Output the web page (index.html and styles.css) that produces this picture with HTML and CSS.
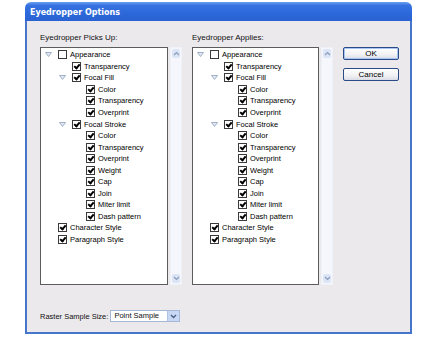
FILE: index.html
```html
<!DOCTYPE html>
<html lang="en">
<head>
    <meta charset="UTF-8">
    <title>Eyedropper Options</title>
    <link rel="stylesheet" href="styles.css">
</head>
<body>
    <div class="window">
        <div class="titlebar">Eyedropper Options</div>
        <div class="body">
            <div class="cols">
                <div class="col col-left">
                    <div class="label">Eyedropper Picks Up:</div>
                    <div class="list">
                        <div class="tree">
                            <div class="row l0"><span class="tw"><svg width="7" height="5" viewBox="0 0 7 5"><polygon points="0.5,0.5 6.5,0.5 3.5,4.5" fill="#e3e9f3" stroke="#9fb0c8"/></svg></span><span class="cb"></span>Appearance</div>
                            <div class="row l1"><span class="tw"></span><span class="cb on"></span>Transparency</div>
                            <div class="row l1"><span class="tw"><svg width="7" height="5" viewBox="0 0 7 5"><polygon points="0.5,0.5 6.5,0.5 3.5,4.5" fill="#e3e9f3" stroke="#9fb0c8"/></svg></span><span class="cb on"></span>Focal Fill</div>
                            <div class="row l2"><span class="tw"></span><span class="cb on"></span>Color</div>
                            <div class="row l2"><span class="tw"></span><span class="cb on"></span>Transparency</div>
                            <div class="row l2"><span class="tw"></span><span class="cb on"></span>Overprint</div>
                            <div class="row l1"><span class="tw"><svg width="7" height="5" viewBox="0 0 7 5"><polygon points="0.5,0.5 6.5,0.5 3.5,4.5" fill="#e3e9f3" stroke="#9fb0c8"/></svg></span><span class="cb on"></span>Focal Stroke</div>
                            <div class="row l2"><span class="tw"></span><span class="cb on"></span>Color</div>
                            <div class="row l2"><span class="tw"></span><span class="cb on"></span>Transparency</div>
                            <div class="row l2"><span class="tw"></span><span class="cb on"></span>Overprint</div>
                            <div class="row l2"><span class="tw"></span><span class="cb on"></span>Weight</div>
                            <div class="row l2"><span class="tw"></span><span class="cb on"></span>Cap</div>
                            <div class="row l2"><span class="tw"></span><span class="cb on"></span>Join</div>
                            <div class="row l2"><span class="tw"></span><span class="cb on"></span>Miter limit</div>
                            <div class="row l2"><span class="tw"></span><span class="cb on"></span>Dash pattern</div>
                            <div class="row l0"><span class="tw"></span><span class="cb on"></span>Character Style</div>
                            <div class="row l0"><span class="tw"></span><span class="cb on"></span>Paragraph Style</div>
                        </div>
                        <div class="sb">
                            <span class="sb-btn"><svg width="7" height="5" viewBox="0 0 7 5"><polyline points="1,4 3.5,1.5 6,4" fill="none" stroke="#8a9cba" stroke-width="1.2"/></svg></span>
                            <span class="sb-btn"><svg width="7" height="5" viewBox="0 0 7 5"><polyline points="1,1 3.5,3.5 6,1" fill="none" stroke="#8a9cba" stroke-width="1.2"/></svg></span>
                        </div>
                    </div>
                </div>
                <div class="col col-right">
                    <div class="label">Eyedropper Applies:</div>
                    <div class="list">
                        <div class="tree">
                            <div class="row l0"><span class="tw"><svg width="7" height="5" viewBox="0 0 7 5"><polygon points="0.5,0.5 6.5,0.5 3.5,4.5" fill="#e3e9f3" stroke="#9fb0c8"/></svg></span><span class="cb"></span>Appearance</div>
                            <div class="row l1"><span class="tw"></span><span class="cb on"></span>Transparency</div>
                            <div class="row l1"><span class="tw"><svg width="7" height="5" viewBox="0 0 7 5"><polygon points="0.5,0.5 6.5,0.5 3.5,4.5" fill="#e3e9f3" stroke="#9fb0c8"/></svg></span><span class="cb on"></span>Focal Fill</div>
                            <div class="row l2"><span class="tw"></span><span class="cb on"></span>Color</div>
                            <div class="row l2"><span class="tw"></span><span class="cb on"></span>Transparency</div>
                            <div class="row l2"><span class="tw"></span><span class="cb on"></span>Overprint</div>
                            <div class="row l1"><span class="tw"><svg width="7" height="5" viewBox="0 0 7 5"><polygon points="0.5,0.5 6.5,0.5 3.5,4.5" fill="#e3e9f3" stroke="#9fb0c8"/></svg></span><span class="cb on"></span>Focal Stroke</div>
                            <div class="row l2"><span class="tw"></span><span class="cb on"></span>Color</div>
                            <div class="row l2"><span class="tw"></span><span class="cb on"></span>Transparency</div>
                            <div class="row l2"><span class="tw"></span><span class="cb on"></span>Overprint</div>
                            <div class="row l2"><span class="tw"></span><span class="cb on"></span>Weight</div>
                            <div class="row l2"><span class="tw"></span><span class="cb on"></span>Cap</div>
                            <div class="row l2"><span class="tw"></span><span class="cb on"></span>Join</div>
                            <div class="row l2"><span class="tw"></span><span class="cb on"></span>Miter limit</div>
                            <div class="row l2"><span class="tw"></span><span class="cb on"></span>Dash pattern</div>
                            <div class="row l0"><span class="tw"></span><span class="cb on"></span>Character Style</div>
                            <div class="row l0"><span class="tw"></span><span class="cb on"></span>Paragraph Style</div>
                        </div>
                        <div class="sb">
                            <span class="sb-btn"><svg width="7" height="5" viewBox="0 0 7 5"><polyline points="1,4 3.5,1.5 6,4" fill="none" stroke="#8a9cba" stroke-width="1.2"/></svg></span>
                            <span class="sb-btn"><svg width="7" height="5" viewBox="0 0 7 5"><polyline points="1,1 3.5,3.5 6,1" fill="none" stroke="#8a9cba" stroke-width="1.2"/></svg></span>
                        </div>
                    </div>
                </div>
                <div class="col col-buttons">
                    <button class="btn btn-default">OK</button>
                    <button class="btn">Cancel</button>
                </div>
            </div>
            <div class="raster">
                <span>Raster Sample Size:</span>
                <div class="select">
                    <span class="select-value">Point Sample</span>
                    <span class="select-arrow"><svg width="7" height="5" viewBox="0 0 7 5"><polyline points="1,1 3.5,3.5 6,1" fill="none" stroke="#4d6185" stroke-width="1.4"/></svg></span>
                </div>
            </div>
        </div>
    </div>
</body>
</html>
```

FILE: styles.css
```css
body {
    margin: 0;
    background: #fff;
    font-family: 'Liberation Sans', Arial, sans-serif;
    color: #000;
}
.window {
    margin: 2px 0 0 25px;
    width: 387px;
}
.titlebar {
    height: 19px;
    box-sizing: border-box;
    padding: 1px 0 0 5px;
    display: flex;
    align-items: center;
    border-radius: 6px 6px 0 0;
    background: linear-gradient(#6a9ff0 0%, #3673e0 18%, #2c68da 60%, #2a62d2 100%);
    color: #fff;
    font-family: 'DejaVu Sans', sans-serif;
    font-weight: bold;
    font-size: 8px;
}
.body {
    border: 2px solid #4676cc;
    border-top: none;
    background: #ece9ed;
    padding: 12px 11px 10px 13px;
}
.cols {
    display: flex;
    gap: 10px;
}
.col-left {
    width: 142px;
}
.col-right {
    width: 141px;
}
.col-buttons {
    width: 56px;
    padding-top: 14px;
    display: flex;
    flex-direction: column;
    gap: 8px;
}
.label {
    height: 10px;
    line-height: 10px;
    font-size: 8px;
    margin-bottom: 4px;
    color: #111;
}
.list {
    display: flex;
    height: 238px;
}
.tree {
    flex: 1;
    background: #fff;
    border: 1px solid #5c5c5c;
    padding-top: 1px;
}
.row {
    height: 11.55px;
    display: flex;
    align-items: center;
    font-size: 7.5px;
    white-space: nowrap;
}
.l0 {
    padding-left: 4px;
}
.l1 {
    padding-left: 18px;
}
.l2 {
    padding-left: 32px;
}
.tw {
    width: 13px;
    flex-shrink: 0;
    display: flex;
    align-items: center;
}
.cb {
    position: relative;
    width: 7px;
    height: 7px;
    flex-shrink: 0;
    border: 1px solid #3a3a3a;
    background: #fff;
    margin-right: 3px;
}
.cb.on::after {
    content: "";
    position: absolute;
    left: 2px;
    top: 0px;
    width: 2px;
    height: 4px;
    border-right: 2px solid #000;
    border-bottom: 2px solid #000;
    transform: rotate(40deg);
}
.sb {
    width: 12px;
    margin-left: 2px;
    background: #f5f7fc;
    border: 1px solid #eef1f8;
    box-sizing: border-box;
    display: flex;
    flex-direction: column;
    justify-content: space-between;
    padding: 1px 0;
}
.sb-btn {
    height: 9px;
    margin: 0 1px;
    background: #dbe5f6;
    border-radius: 2px;
    display: flex;
    align-items: center;
    justify-content: center;
}
.btn {
    height: 13px;
    padding: 0;
    border: 1px solid #2c4a85;
    border-radius: 2px;
    background: linear-gradient(#ffffff, #f1f1f4 60%, #d9dce6);
    font-family: 'Liberation Sans', Arial, sans-serif;
    font-size: 8px;
    line-height: 11px;
    color: #000;
}
.btn-default {
    box-shadow: inset 0 0 0 1px #a8c4f0;
}
.raster {
    display: flex;
    align-items: center;
    height: 12px;
    margin-top: 25px;
    font-size: 7.5px;
    color: #111;
}
.select {
    display: flex;
    height: 12px;
    margin-left: 2px;
    border: 1px solid #a5b9d6;
    background: #fff;
    box-sizing: border-box;
}
.select-value {
    width: 53px;
    padding-left: 3px;
    line-height: 10px;
}
.select-arrow {
    width: 11px;
    background: #c7d7f4;
    border-left: 1px solid #b0c4e4;
    display: flex;
    align-items: center;
    justify-content: center;
}
```
